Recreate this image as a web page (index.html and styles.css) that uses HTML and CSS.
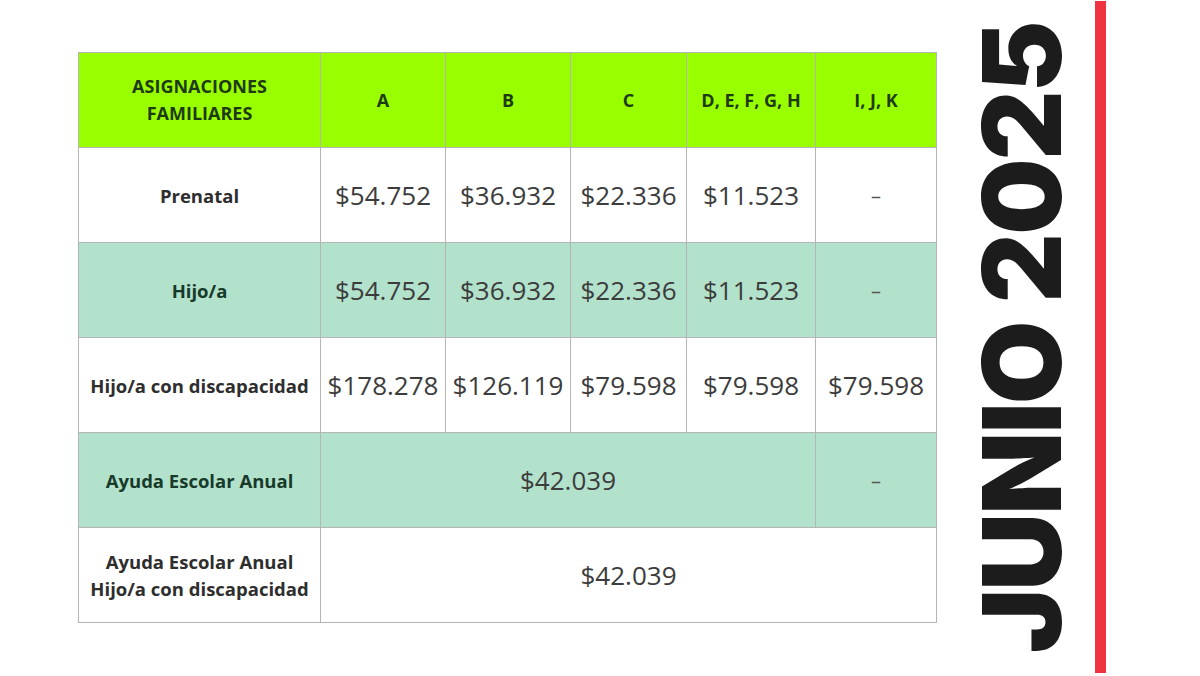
FILE: index.html
```html
<!DOCTYPE html>
<html lang="es">
<head>
<meta charset="utf-8">
<title>Asignaciones Familiares Junio 2025</title>
<link rel="stylesheet" href="styles.css">
</head>
<body>
<main class="page">
  <section class="table-wrap">
    <table class="af">
      <colgroup>
        <col class="c0"><col class="c1"><col class="c2"><col class="c3"><col class="c4"><col class="c5">
      </colgroup>
      <thead>
        <tr>
          <th>ASIGNACIONES<br>FAMILIARES</th>
          <th>A</th>
          <th>B</th>
          <th>C</th>
          <th>D, E, F, G, H</th>
          <th>I, J, K</th>
        </tr>
      </thead>
      <tbody>
        <tr>
          <td class="lbl">Prenatal</td>
          <td>$54.752</td><td>$36.932</td><td>$22.336</td><td>$11.523</td><td class="dash">–</td>
        </tr>
        <tr class="alt">
          <td class="lbl">Hijo/a</td>
          <td>$54.752</td><td>$36.932</td><td>$22.336</td><td>$11.523</td><td class="dash">–</td>
        </tr>
        <tr>
          <td class="lbl">Hijo/a con discapacidad</td>
          <td>$178.278</td><td>$126.119</td><td>$79.598</td><td>$79.598</td><td>$79.598</td>
        </tr>
        <tr class="alt">
          <td class="lbl">Ayuda Escolar Anual</td>
          <td colspan="4" class="span">$42.039</td><td class="dash">–</td>
        </tr>
        <tr>
          <td class="lbl">Ayuda Escolar Anual<br>Hijo/a con discapacidad</td>
          <td colspan="5" class="span">$42.039</td>
        </tr>
      </tbody>
    </table>
  </section>
  <aside class="side">
    <div class="title">JUNIO 2025</div>
    <div class="redline"></div>
  </aside>
</main>
</body>
</html>
```
FILE: styles.css
```css
html, body {
  margin: 0;
  padding: 0;
  background: #ffffff;
}
.page {
  display: flex;
  width: 1200px;
  height: 676px;
  overflow: hidden;
}
.table-wrap {
  padding: 52px 0 0 78px;
}
.af {
  border-collapse: collapse;
  table-layout: fixed;
  width: 858px;
  font-family: "Open Sans", "Liberation Sans", sans-serif;
}
.c0 { width: 242px; }
.c1 { width: 125px; }
.c2 { width: 125px; }
.c3 { width: 116px; }
.c4 { width: 129px; }
.c5 { width: 121px; }
.af th, .af td {
  border: 1px solid #b5b5b5;
  text-align: center;
  vertical-align: middle;
  height: 95px;
  padding: 0;
  box-sizing: border-box;
}
.af th {
  background: #99ff00;
  color: #1e3a12;
  font-size: 18px;
  font-weight: 700;
  line-height: 27px;
}
.af td {
  color: #3c3c3c;
  font-size: 26px;
  font-weight: 400;
}
.af td.lbl {
  color: #2e2e2e;
  font-size: 18.5px;
  font-weight: 700;
  line-height: 27px;
}
.af tr.alt td {
  background: #b3e2cc;
}
.af tr.alt td.lbl {
  color: #173a2a;
}
.af td.dash {
  font-size: 20px;
  color: #555;
}
.side {
  display: flex;
  align-items: stretch;
  margin-left: 37px;
}
.title {
  writing-mode: vertical-rl;
  transform: rotate(180deg);
  font-family: "Inter", "Roboto", "Liberation Sans", sans-serif;
  font-weight: 900;
  font-size: 108px;
  line-height: 96px;
  color: #1c1c1c;
  text-align: center;
  letter-spacing: -2px;
  height: 676px;
}
.redline {
  width: 11px;
  margin: 1px 0 3px 25px;
  background: #ee3440;
}
```
